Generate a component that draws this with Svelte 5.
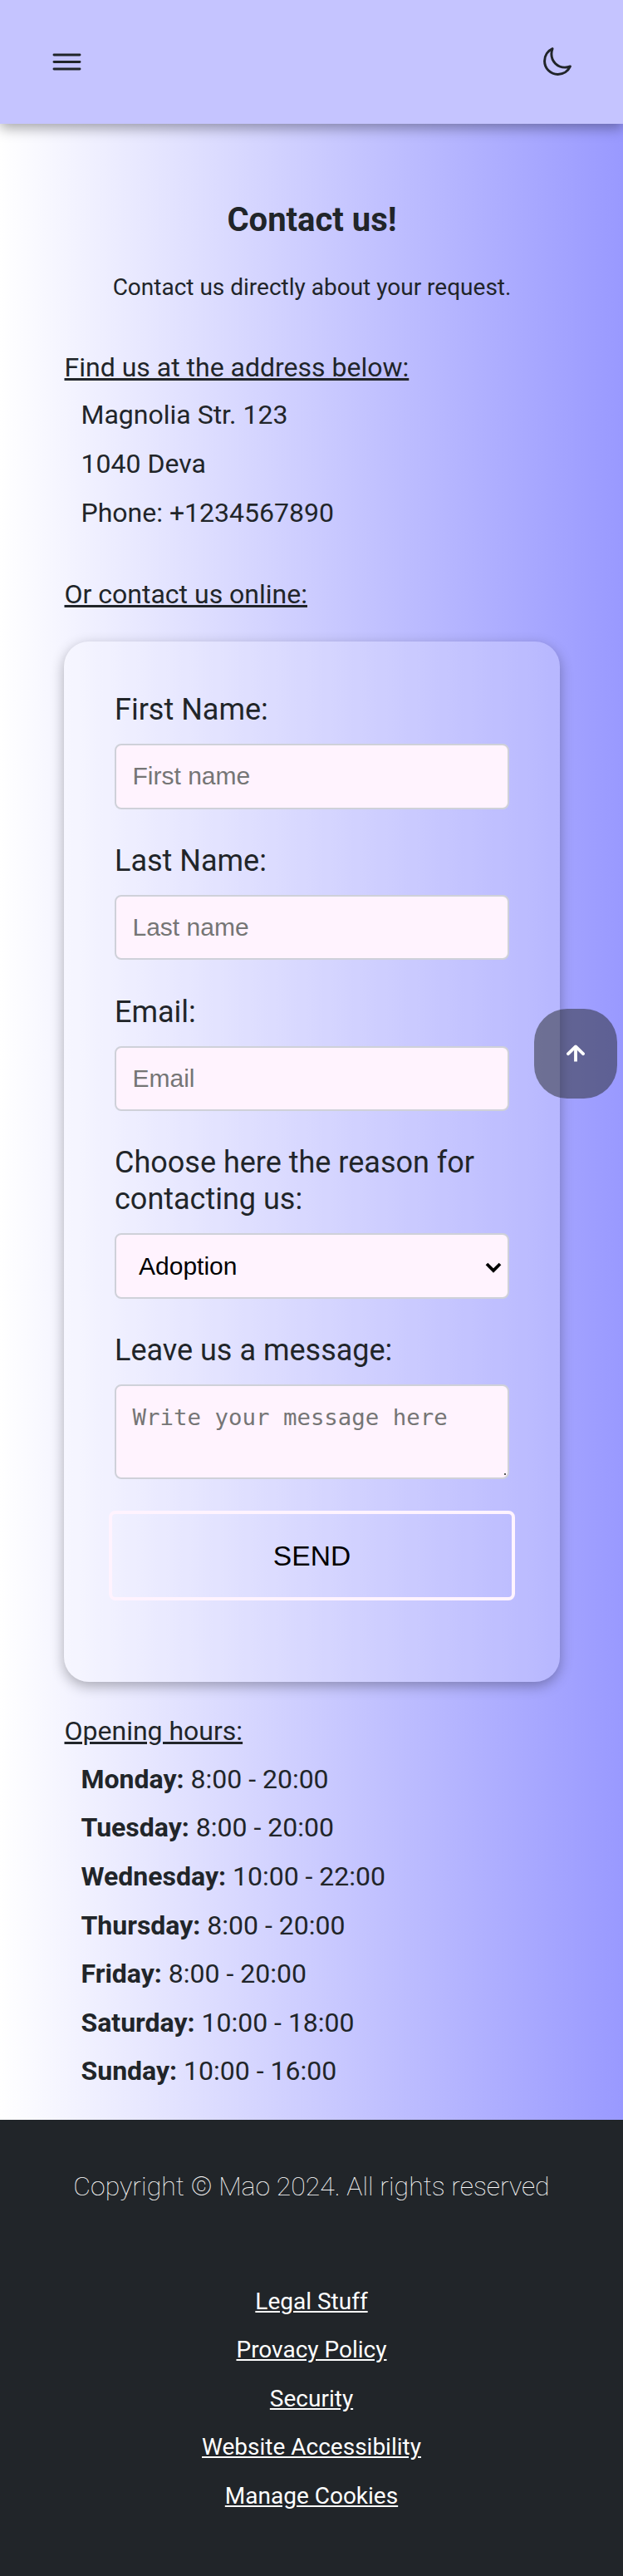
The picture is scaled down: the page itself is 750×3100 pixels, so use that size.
<script>
  const address = ['Magnolia Str. 123', '1040 Deva', 'Phone: +1234567890'];
  const hours = [
    ['Monday', '8:00 - 20:00'],
    ['Tuesday', '8:00 - 20:00'],
    ['Wednesday', '10:00 - 22:00'],
    ['Thursday', '8:00 - 20:00'],
    ['Friday', '8:00 - 20:00'],
    ['Saturday', '10:00 - 18:00'],
    ['Sunday', '10:00 - 16:00']
  ];
  const fields = [
    { id: 'first', label: 'First Name:', hint: 'First name' },
    { id: 'last', label: 'Last Name:', hint: 'Last name' },
    { id: 'email', label: 'Email:', hint: 'Email' }
  ];
  const links = ['Legal Stuff', 'Provacy Policy', 'Security', 'Website Accessibility', 'Manage Cookies'];
</script>

<div class="page">
  <header>
    <svg class="menu" viewBox="0 0 512 512" aria-hidden="true">
      <path d="M80 160h352M80 256h352M80 352h352" />
    </svg>
    <svg class="moon" viewBox="0 0 512 512" aria-hidden="true">
      <path d="M160 136c0-30.62 4.51-61.61 16-88C99.57 81.27 48 159.32 48 248c0 119.29 96.71 216 216 216 88.68 0 166.73-51.57 200-128-26.39 11.49-57.38 16-88 16-119.29 0-216-96.71-216-216z" />
    </svg>
  </header>

  <main>
    <h1>Contact us!</h1>
    <p class="lead">Contact us directly about your request.</p>

    <h2>Find us at the address below:</h2>
    <ul class="address">
      {#each address as line}
        <li>{line}</li>
      {/each}
    </ul>

    <h2>Or contact us online:</h2>
    <form>
      {#each fields as f}
        <label for={f.id}>{f.label}</label>
        <input id={f.id} type="text" placeholder={f.hint} />
      {/each}
      <label for="reason">Choose here the reason for contacting us:</label>
      <div class="select">
        <select id="reason"><option>Adoption</option></select>
        <svg viewBox="0 0 20 13" aria-hidden="true"><path d="M2 2l8 8 8-8" /></svg>
      </div>
      <label for="message">Leave us a message:</label>
      <div class="message">
        <textarea id="message" placeholder="Write your message here"></textarea>
        <span class="grip"></span>
      </div>
      <button type="button" class="send">SEND</button>
    </form>

    <h2>Opening hours:</h2>
    <ul>
      {#each hours as [day, time]}
        <li><b>{day}:</b> {time}</li>
      {/each}
    </ul>
  </main>

  <footer>
    <p>Copyright © Mao 2024. All rights reserved</p>
    <nav>
      {#each links as link}
        <a href="#top">{link}</a>
      {/each}
    </nav>
  </footer>

  <button type="button" class="to-top" aria-label="Top">
    <svg viewBox="0 0 22 22" aria-hidden="true">
      <path d="M11 20.5V3" stroke-linecap="butt" />
      <path d="M2 11.2L11 2.4l9 8.8" />
    </svg>
  </button>
</div>

<style>
  :global(body) {
    margin: 0;
  }
  .page {
    position: relative;
    display: flex;
    flex-direction: column;
    height: 3100px;
    font-family: Roboto, sans-serif;
    color: #212529;
    background: linear-gradient(90deg, #fff, #99f);
  }
  header {
    box-sizing: border-box;
    height: 149px;
    flex: none;
    padding: 0 60px 1px 57.5px;
    display: flex;
    align-items: center;
    justify-content: space-between;
    background: #c5c4ff;
    box-shadow: 0 5px 15px rgba(0, 0, 0, 0.35);
  }
  header svg {
    fill: none;
    stroke: #212529;
    stroke-linecap: round;
    stroke-linejoin: round;
  }
  .menu {
    width: 45px;
    height: 45px;
    stroke-width: 34;
  }
  .moon {
    width: 38px;
    height: 38px;
    stroke-width: 40;
  }
  main {
    box-sizing: border-box;
    height: 2401.5px;
    flex: none;
    padding: 92px 76.5px 0 77.5px;
  }
  h1,
  h2,
  p,
  ul {
    margin: 0;
    padding: 0;
  }
  h1 {
    font-size: 40px;
    line-height: 48px;
    font-weight: 700;
    text-align: center;
  }
  .lead {
    margin: 36px 0 51px;
    font-size: 28px;
    line-height: 42px;
    text-align: center;
  }
  h2 {
    font-size: 32px;
    line-height: 48px;
    font-weight: 400;
    text-decoration: underline;
    text-decoration-thickness: 3px;
    text-underline-offset: 2px;
  }
  ul {
    list-style: none;
    padding: 4.4px 0 0 20px;
    font-size: 32px;
    line-height: 58.6px;
  }
  .address {
    margin-bottom: 44.6px;
  }
  form {
    box-sizing: border-box;
    height: 1251.5px;
    margin: 33.4px 0 35.7px -0.5px;
    padding: 60.8px 61px 0 61px;
    border-radius: 30px;
    background: rgba(255, 255, 255, 0.22);
    box-shadow: 0 5px 16px rgba(0, 0, 0, 0.3);
  }
  label {
    display: block;
    margin-bottom: 18.9px;
    font-size: 36px;
    line-height: 43.4px;
  }
  input,
  select,
  textarea {
    box-sizing: border-box;
    display: block;
    width: 100%;
    height: 78.4px;
    margin: 0 0 41.1px;
    padding: 0 19.5px;
    border: 2px solid #cfd1d9;
    border-radius: 8px;
    background: #fff3fe;
    font: 30px "Liberation Sans", Arial, sans-serif;
    color: #000;
  }
  ::placeholder {
    color: #757575;
    opacity: 1;
  }
  .select {
    position: relative;
    margin-bottom: 41.3px;
  }
  select {
    appearance: none;
    height: 78.7px;
    margin: 0;
    padding: 1px 27px 0;
  }
  .select svg {
    position: absolute;
    right: 9px;
    top: 35px;
    width: 20px;
    height: 13px;
    fill: none;
    stroke: #000;
    stroke-width: 3.8;
  }
  .message {
    position: relative;
    margin-bottom: 38px;
  }
  textarea {
    height: 114px;
    margin: 0;
    padding-top: 22px;
    resize: none;
    font: 27.4px "DejaVu Sans Mono", monospace;
  }
  .grip {
    position: absolute;
    right: 4px;
    bottom: 5px;
    width: 2px;
    height: 2px;
    background: #555;
  }
  .send {
    box-sizing: border-box;
    display: block;
    width: 489px;
    height: 107.5px;
    margin: 0 -7px;
    padding: 1px 0 0;
    border: 4px solid #fff3fe;
    border-radius: 8px;
    background: transparent;
    font: 33.6px "Liberation Sans", Arial, sans-serif;
    color: #000;
  }
  footer {
    flex: 1;
    background: #212529;
    color: #fff;
    text-align: center;
  }
  footer p {
    padding-top: 56px;
    font-size: 32px;
    line-height: 48px;
    font-weight: 100;
  }
  nav {
    display: flex;
    flex-direction: column;
    align-items: center;
    padding-top: 86.4px;
    font-size: 28px;
    line-height: 58.5px;
  }
  a {
    color: #fff;
    text-decoration: underline;
  }
  .to-top {
    position: absolute;
    left: 643px;
    top: 1214px;
    width: 99.5px;
    height: 108px;
    padding: 0;
    display: flex;
    align-items: center;
    justify-content: center;
    border: 0;
    border-radius: 40px;
    background: rgba(33, 37, 41, 0.5);
  }
  .to-top svg {
    width: 22px;
    height: 22px;
    fill: none;
    stroke: #fff;
    stroke-width: 3.8;
    stroke-linecap: round;
    stroke-linejoin: round;
  }
</style>
